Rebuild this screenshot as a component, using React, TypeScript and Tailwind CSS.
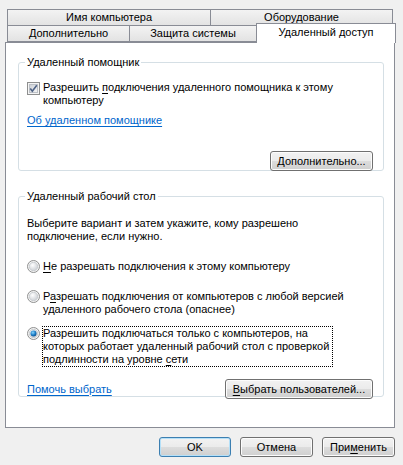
import React from "react";

const font = { fontFamily: '"Liberation Sans", Arial, sans-serif' };

function Tab({ label, width, active }: { label: string; width: string; active?: boolean }) {
  if (active) {
    return (
      <div
        className={`${width} relative z-10 -mt-[2px] mb-[-1px] h-[20px] border border-b-0 border-[#898c95] bg-white pt-[2px] text-center`}
      >
        {label}
      </div>
    );
  }
  return (
    <div
      className={`${width} h-[17px] border border-[#898c95] bg-gradient-to-b from-[#f3f3f3] to-[#e3e3e3] pt-[1px] text-center -ml-px first:ml-0`}
    >
      {label}
    </div>
  );
}

function Button({ children, className = "", primary }: { children: React.ReactNode; className?: string; primary?: boolean }) {
  return (
    <div
      className={`flex h-[20px] items-center justify-center rounded-[3px] border ${
        primary ? "border-[#3c7fb1] shadow-[inset_0_0_0_1px_#b5e0f8]" : "border-[#707070] shadow-[inset_0_0_0_1px_#fcfcfc]"
      } bg-[linear-gradient(to_bottom,#f2f2f2_0%,#ebebeb_50%,#dddddd_50%,#cfcfcf_100%)] ${className}`}
    >
      {children}
    </div>
  );
}

function Checkbox() {
  return (
    <svg width="13" height="13" viewBox="0 0 13 13" className="shrink-0">
      <defs>
        <linearGradient id="cb" x1="0" y1="0" x2="1" y2="1">
          <stop offset="0" stopColor="#cbcfd5" />
          <stop offset="1" stopColor="#f6f6f6" />
        </linearGradient>
      </defs>
      <rect x="0.5" y="0.5" width="12" height="12" fill="#f4f4f4" stroke="#8e8f8f" />
      <rect x="2.5" y="2.5" width="8" height="8" fill="url(#cb)" stroke="#bcc0c6" />
      <path d="M3.3 6.6 L5.3 9.2 L9.8 3.2" fill="none" stroke="#4d6185" strokeWidth="1.6" />
    </svg>
  );
}

function Radio({ checked }: { checked?: boolean }) {
  return (
    <svg width="13" height="13" viewBox="0 0 13 13" className="shrink-0">
      <defs>
        <radialGradient id="rg" cx="0.4" cy="0.35" r="0.7">
          <stop offset="0" stopColor="#ffffff" />
          <stop offset="1" stopColor="#c9cdd2" />
        </radialGradient>
        <radialGradient id="rb" cx="0.4" cy="0.35" r="0.7">
          <stop offset="0" stopColor="#8ad6ff" />
          <stop offset="0.6" stopColor="#1a7bc4" />
          <stop offset="1" stopColor="#0d4d8a" />
        </radialGradient>
      </defs>
      <circle cx="6.5" cy="6.5" r="6" fill="#f4f4f4" stroke="#8e8f8f" />
      <circle cx="6.5" cy="6.5" r="4.2" fill="url(#rg)" stroke="#c4c8cc" strokeWidth="0.8" />
      {checked && <circle cx="6.5" cy="6.5" r="3" fill="url(#rb)" />}
    </svg>
  );
}

function U({ children }: { children: React.ReactNode }) {
  return <span className="underline underline-offset-[2px]">{children}</span>;
}

export default function App() {
  return (
    <div className="h-[465px] w-[403px] overflow-hidden bg-[#f0f0f0] text-[11px] leading-[13px] text-black" style={font}>
      <div className="pl-[7px] pt-[9px]">
        <div className="flex">
          <Tab label="Имя компьютера" width="w-[204px]" />
          <Tab label="Оборудование" width="w-[183px]" />
        </div>
        <div className="-mt-px flex">
          <Tab label="Дополнительно" width="w-[123px]" />
          <Tab label="Защита системы" width="w-[128px]" />
          <Tab label="Удаленный доступ" width="w-[140px] -ml-px" active />
        </div>
      </div>

      <div className="ml-[5px] h-[386px] w-[390px] border border-[#898c95] bg-white pl-[12px] pt-[13px]">
        <fieldset className="flex h-[115px] w-[366px] flex-col rounded-[3px] border border-[#d5dfe5] pl-[8px] pr-[10px]">
          <legend className="-ml-[2px] px-[2px]">Удаленный помощник</legend>
          <div className="mt-[12px] flex gap-[3px]">
            <div className="pt-[1px]">
              <Checkbox />
            </div>
            <div>
              Разрешить <U>п</U>одключения удаленного помощника к этому
              <br />
              компьютеру
            </div>
          </div>
          <div className="mt-[7px] text-[#0066cc] underline underline-offset-[2px]">Об удаленном помощнике</div>
          <div className="mt-[24px] flex justify-end">
            <Button className="w-[103px]">
              <span>
                <U>Д</U>ополнительно...
              </span>
            </Button>
          </div>
        </fieldset>

        <fieldset className="mt-[19px] flex h-[207px] w-[366px] flex-col rounded-[3px] border border-[#d5dfe5] pl-[8px] pr-[10px]">
          <legend className="-ml-[2px] px-[2px]">Удаленный рабочий стол</legend>
          <div className="mt-[14px]">
            Выберите вариант и затем укажите, кому разрешено
            <br />
            подключение, если нужно.
          </div>
          <div className="mt-[17px] flex items-start gap-[3px]">
            <Radio />
            <div>
              <U>Н</U>е разрешать подключения к этому компьютеру
            </div>
          </div>
          <div className="mt-[17px] flex items-start gap-[3px]">
            <Radio />
            <div>
              Р<U>а</U>зрешать подключения от компьютеров с любой версией
              <br />
              удаленного рабочего стола (опаснее)
            </div>
          </div>
          <div className="mt-[10px] flex items-start gap-[2px]">
            <div className="pt-[1px]">
              <Radio checked />
            </div>
            <div className="border border-dotted border-black pr-[3px]">
              Разрешить подключаться только с компьютеров, на
              <br />
              которых работает удаленный рабочий стол с проверкой
              <br />
              подлинности на уровне <U>с</U>ети
            </div>
          </div>
          <div className="mt-[12px] flex items-center justify-between">
            <div className="text-[#0066cc] underline underline-offset-[2px]">Помочь выбрать</div>
            <Button className="w-[148px]">
              <span>
                <U>В</U>ыбрать пользователей...
              </span>
            </Button>
          </div>
        </fieldset>
      </div>

      <div className="mt-[9px] flex justify-end gap-[9px] pr-[8px]">
        <Button primary className="w-[72px]">
          OK
        </Button>
        <Button className="w-[73px]">Отмена</Button>
        <Button className="w-[73px]">
          <span>
            При<U>м</U>енить
          </span>
        </Button>
      </div>
    </div>
  );
}
